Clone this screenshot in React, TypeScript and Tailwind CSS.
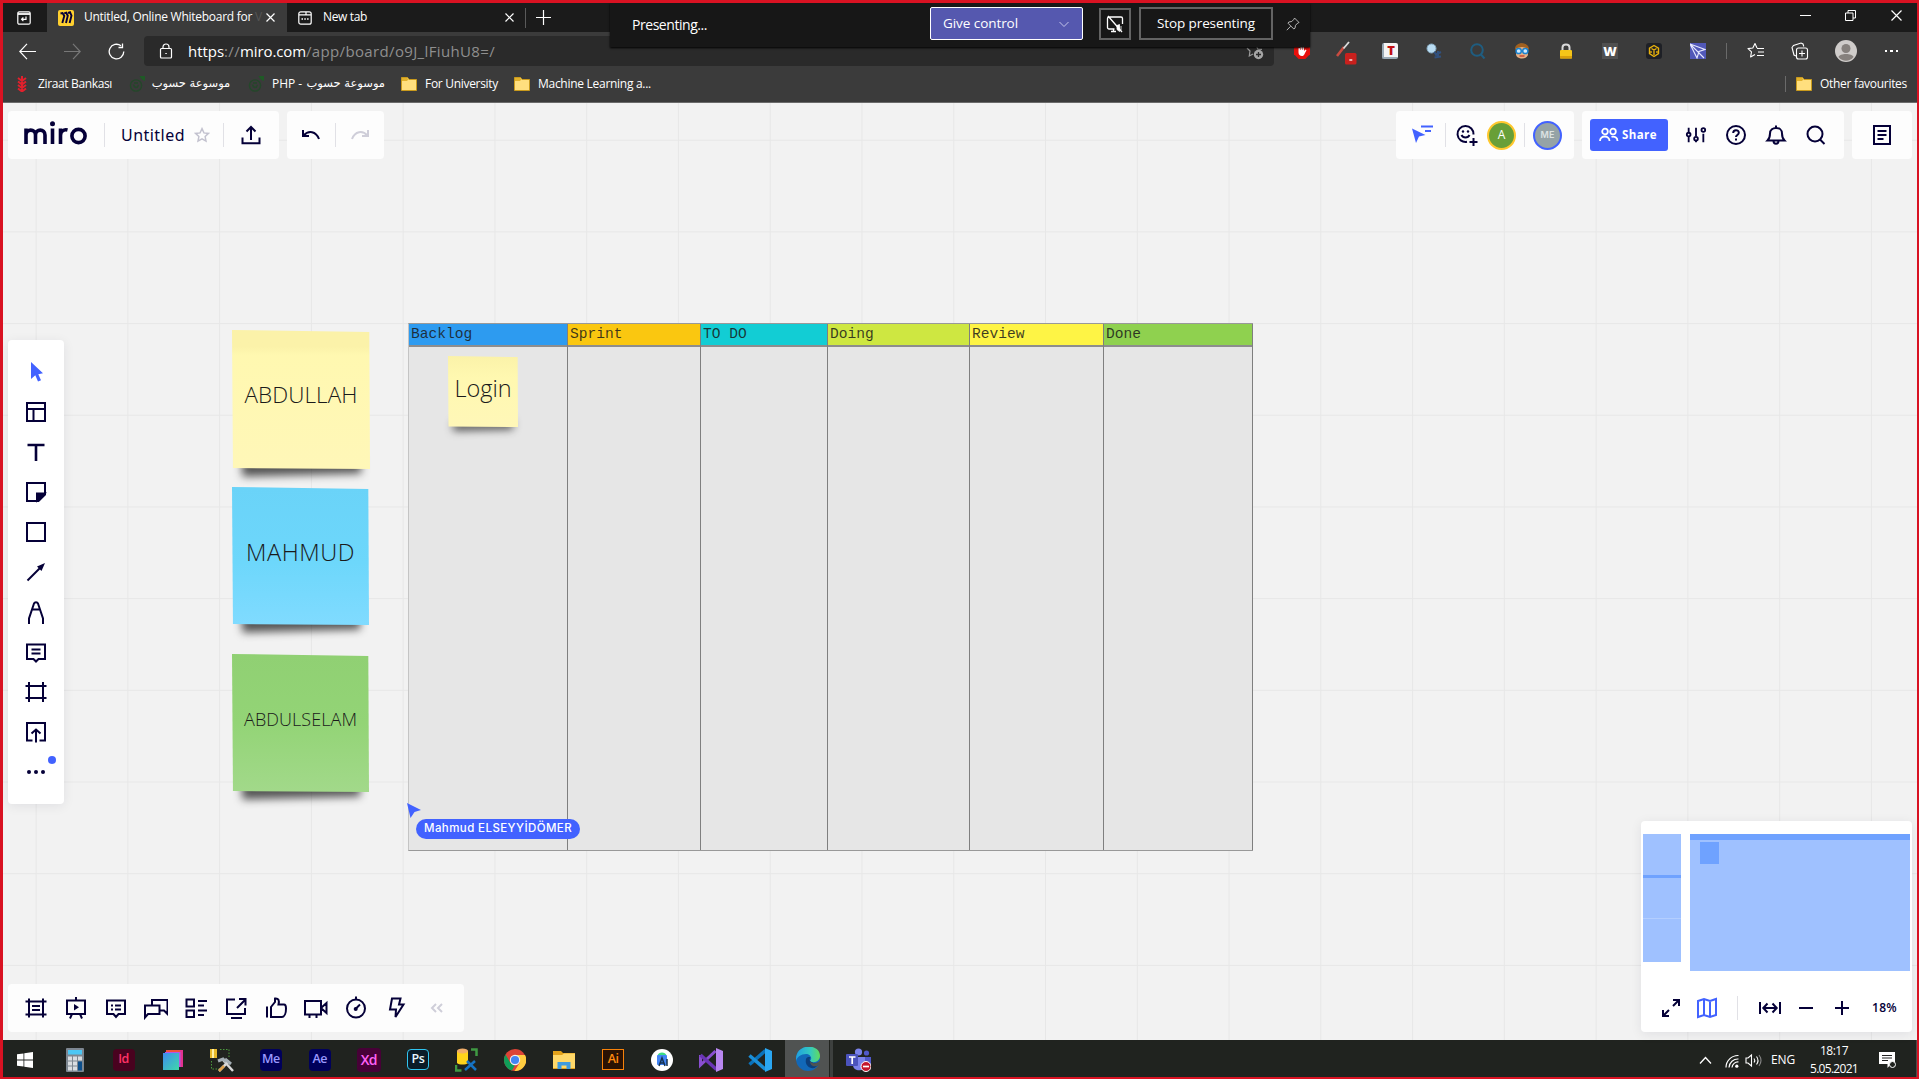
import { useLayoutEffect, useRef, type ReactNode } from "react";

/* Text set to a fixed advance width by spreading the difference over its letters. */
function Fit({ w, className = "", children }: { w: number; className?: string; children: string }) {
  const ref = useRef<HTMLSpanElement>(null);
  useLayoutEffect(() => {
    const el = ref.current;
    if (!el) return;
    el.style.letterSpacing = "0px";
    const natural = el.getBoundingClientRect().width;
    el.style.letterSpacing = `${(w - natural) / children.length}px`;
  }, [w, children]);
  return (
    <span ref={ref} className={`inline-block shrink-0 whitespace-pre ${className}`}>
      {children}
    </span>
  );
}

function Svg({ s = 24, vb = "0 0 24 24", sw = 2, className = "", children }: { s?: number; vb?: string; sw?: number; className?: string; children: ReactNode }) {
  return (
    <svg width={s} height={s} viewBox={vb} fill="none" stroke="currentColor" strokeWidth={sw} className={`shrink-0 ${className}`}>
      {children}
    </svg>
  );
}

function Cell({ className = "", children }: { className?: string; children?: ReactNode }) {
  return <div className={`flex shrink-0 items-center justify-center ${className}`}>{children}</div>;
}

const Sep = ({ className = "" }: { className?: string }) => <div className={`h-6 w-px shrink-0 bg-[#e1e1e6] ${className}`} />;

function Folder() {
  return (
    <svg width="16" height="14" viewBox="0 0 16 14" className="shrink-0">
      <path d="M.5.5h6l1.500 2h7.500v11H.5z" fill="#ffdf7e" stroke="#c99a1c" />
      <path d="M1 1h5.200l1 1.600L6 4H1z" fill="#e2b12c" />
    </svg>
  );
}

function Seedling() {
  return (
    <svg width="16" height="17" viewBox="0 0 16 17" fill="none" className="shrink-0">
      <circle cx="7" cy="10.500" r="5.600" stroke="#24472a" strokeWidth="1.400" />
      <path d="M4.500 9.500c1 4 4 4 5 .5M5 8h4" stroke="#24472a" strokeWidth="1.400" />
      <path d="M10.500 1H16v5c-2-.5-4-2-5.500-5z" fill="#1f5a26" />
    </svg>
  );
}

function TabStrip() {
  return (
    <div className="flex h-[29px] shrink-0 items-center bg-[#1b1b1b] text-white">
      <Cell className="mr-px w-[43px] pr-[2px]">
        <Svg s={14} vb="0 0 14 14" sw={1.2}>
          <rect x=".8" y=".8" width="12.400" height="12.400" rx="1.500" />
          <path d="M1 3h12" strokeWidth="1.800" />
          <path d="M9 5.500v2.800H4.800M6.400 6.500 4.600 8.300l1.800 1.800" />
        </Svg>
      </Cell>
      <div className="flex h-full w-[240px] items-center bg-[#3b3b3b] pl-[11px]">
        <svg width="16" height="16" viewBox="0 0 16 16" className="shrink-0">
          <rect width="16" height="16" rx="2" fill="#ffd02f" />
          <path d="M2.500 3.500 4.500 3l1.800 3-2 7M6.200 3.300l2-.6 1.600 3-1.800 7.300M10 3l2-.7 1.500 3.300L11.600 13" stroke="#050038" strokeWidth="1.900" fill="none" />
        </svg>
        <Fit w={171} className="ml-[10px] pb-[2px] text-[12px]">{"Untitled, Online Whiteboard for "}</Fit>
        <span className="w-[8px] shrink-0 pb-[2px] text-[12px] text-[#555]">V</span>
        <Svg s={9} vb="0 0 9 9" sw={1.200} className="ml-[3px]"><path d="M.5.5l8 8M8.500.5l-8 8" /></Svg>
      </div>
      <div className="flex h-full items-center pl-[11px]">
        <Svg s={14} vb="0 0 14 14" sw={1.200}>
          <rect x=".8" y=".8" width="12.400" height="12.400" rx="2" />
          <path d="M1 3.800h12M8 1v3" />
          <path d="M3.500 8h1.500M6.300 8h1.500M9.100 8h1.500" strokeWidth="1.500" />
        </Svg>
        <Fit w={44} className="ml-[11px] pb-[2px] text-[12px]">New tab</Fit>
        <Svg s={9} vb="0 0 9 9" sw={1.200} className="ml-[138px]"><path d="M.5.5l8 8M8.500.5l-8 8" /></Svg>
        <div className="ml-[11px] h-5 w-px bg-[#5a5a5a]" />
        <Svg s={15} vb="0 0 15 15" sw={1.200} className="ml-[10px]"><path d="M7.500 0v15M0 7.500h15" /></Svg>
      </div>
      <div className="ml-auto flex items-center pb-[5px] pr-[15px]">
        <Svg s={11} vb="0 0 11 11" sw={1} className="mr-[34px]"><path d="M0 5.500h11" /></Svg>
        <Svg s={11} vb="0 0 11 11" sw={1} className="mr-[35px]"><path d="M.5 3h7.500v7.500H.5zM3 3V.5h7.500V8H8" /></Svg>
        <Svg s={11} vb="0 0 11 11" sw={1.200}><path d="M.5.5l10 10M10.500.5l-10 10" /></Svg>
      </div>
    </div>
  );
}

function Extensions() {
  return (
    <div className="flex items-center">
      <Cell className="w-11">
        <svg width="16" height="16" viewBox="0 0 16 16">
          <path d="M4.700 0h6.600L16 4.700v6.600L11.300 16H4.700L0 11.300V4.700z" fill="#e8100c" />
          <path d="M4.500 8V5h1.500v2h.5V3.500H8V7h.5V4h1.500v4l1.500-1.500 1 .8L10.500 11c-.6 1.500-1.300 2-2.600 2C6 13 4.500 11.500 4.500 9.500z" fill="#fff" />
        </svg>
      </Cell>
      <Cell className="w-11">
        <svg width="22" height="28" viewBox="0 0 22 28">
          <path d="M2 19 9 10" stroke="#c94b40" strokeWidth="2.600" />
          <path d="M8.500 11.500 14 5" stroke="#ddd" strokeWidth="1.800" />
          <rect x="10" y="16" width="11.500" height="11.500" rx="1.500" fill="#c8201d" />
          <path d="M14.300 23h3" stroke="#fff" strokeWidth="1.300" />
        </svg>
      </Cell>
      <Cell className="w-11">
        <div className="flex h-4 w-4 items-center justify-center rounded-[2px] border-b-2 border-l-2 border-[#9aaab5] bg-[#f4f4f4] text-[13px] font-extrabold leading-none text-[#c00f12]">T</div>
      </Cell>
      <Cell className="w-11">
        <svg width="16" height="16" viewBox="0 0 16 16">
          <circle cx="5.500" cy="5.500" r="4.500" fill="#b9dcf2" stroke="#86a9c0" />
          <path d="M8 9l5 5M9 12l6-3M12 8v7M8.500 14.500l6.500-1" stroke="#31507d" strokeWidth="2" />
        </svg>
      </Cell>
      <Cell className="w-11">
        <Svg s={16} vb="0 0 16 16" className="text-[#1f5d80]"><circle cx="7" cy="7" r="5.800" /><path d="m10.500 11 4 4.500" /></Svg>
      </Cell>
      <Cell className="w-11">
        <svg width="16" height="16" viewBox="0 0 16 16">
          <path d="M2 6c0-7 12-7 12 0v5c0 6-12 6-12 0z" fill="#e8b184" />
          <path d="M1 7C0-2 16-2 15 7l-2-2-5-1-5 1z" fill="#a0601f" />
          <circle cx="4.700" cy="8" r="2.600" fill="#cfeaff" stroke="#1b83cf" strokeWidth="1.500" />
          <circle cx="11.300" cy="8" r="2.600" fill="#cfeaff" stroke="#1b83cf" strokeWidth="1.500" />
          <path d="M5.500 13h5" stroke="#c23b2b" strokeWidth="1.300" />
        </svg>
      </Cell>
      <Cell className="w-11">
        <svg width="14" height="16" viewBox="0 0 14 16">
          <path d="M3.500 8V4.500c0-4 7-4 7 0V8" fill="none" stroke="#d9d9d9" strokeWidth="2" />
          <rect x="1" y="7" width="12" height="8.500" rx="1" fill="#f5c518" />
          <path d="M1 13h12v2.500H1z" fill="#d99f0c" />
        </svg>
      </Cell>
      <Cell className="w-11">
        <div className="flex h-4 w-4 items-center justify-center bg-[#505050] text-[13px] font-extrabold leading-none text-white">W</div>
      </Cell>
      <Cell className="w-11">
        <svg width="16" height="16" viewBox="0 0 16 16" fill="none">
          <rect width="16" height="16" rx="3" fill="#1e2026" />
          <path d="M8 2.500l4.500 2.700v5.500L8 13.500l-4.500-2.800V5.200z" stroke="#e8b10c" strokeWidth="1.400" />
          <path d="M5.500 5.500 8 7l2.500-1.500M8 7v5M5 8v2M11 8v2" stroke="#e8b10c" strokeWidth="1.300" />
        </svg>
      </Cell>
      <Cell className="w-11">
        <svg width="16" height="16" viewBox="0 0 16 16" fill="none">
          <rect width="16" height="16" fill="#5158b8" />
          <path d="M0 1 15 6.500 9 8.500 7 15zM0 1l14 14M9 8.500l6-2" stroke="#e7e9ff" strokeWidth="1.100" />
        </svg>
      </Cell>
      <div className="ml-[6px] h-4 w-px bg-[#6a6a6a]" />
      <Cell className="ml-[7px] w-11 text-white">
        <Svg s={18} vb="0 0 18 18" sw={1.100}>
          <path d="M10 6 8 1.500 5.800 6 1 6.600l3.500 3.300-.9 5L8 12.500" strokeLinejoin="round" />
          <path d="M10 6.500h7M11 10h6M10 13.500h7" />
        </Svg>
      </Cell>
      <Cell className="w-11 text-white">
        <Svg s={18} vb="0 0 18 18" sw={1.100}>
          <rect x="5.500" y="6" width="11" height="11" rx="2" />
          <path d="M11 8.500v6M8 11.500h6M5 14l-2-1L1 5.500 2.500 3.500 10 1l2 1 .8 2.500" />
        </Svg>
      </Cell>
      <Cell className="w-[48px]">
        <svg width="22" height="22" viewBox="0 0 22 22">
          <circle cx="11" cy="11" r="11" fill="#cfccca" />
          <circle cx="11" cy="8.500" r="4.500" fill="#86817d" />
          <path d="M3.500 17c1-4 14-4 15 0-4 5-11 5-15 0z" fill="#86817d" />
        </svg>
      </Cell>
      <Cell className="w-[43px] gap-[3px]">
        <i className="h-[2px] w-[2.500px] bg-white" /><i className="h-[2px] w-[2.500px] bg-white" /><i className="h-[2px] w-[2.500px] bg-white" />
      </Cell>
    </div>
  );
}

function AddressRow() {
  return (
    <div className="flex h-[38px] shrink-0 items-center text-white">
      <Svg s={17} vb="0 0 17 17" sw={1.200} className="ml-[16px]"><path d="M.5 8.500H17M8 .8.8 8.500 8 16.200" /></Svg>
      <Svg s={17} vb="0 0 17 17" sw={1.200} className="ml-[28px] text-[#777]"><path d="M0 8.500h16.500M9 .8l7.200 7.700L9 16.200" /></Svg>
      <Svg s={17} vb="0 0 17 17" sw={1.300} className="ml-[27px]"><path d="M15.800 8.500A7.300 7.300 0 1 1 13 2.800M14.500.5v4h-4" /></Svg>
      <div className="ml-[19px] flex h-[30px] w-[1130px] items-center rounded-[4px] bg-[#2a2a2a] pl-[14px]">
        <Svg s={16} vb="0 0 16 16" sw={1.200}><rect x="2.500" y="5.500" width="11" height="9.500" rx="1" /><path d="M5 5.500V4c0-4 6-4 6 0v1.500M7.300 10.500h1.500" /></Svg>
        <span className="ml-[14px] flex text-[15px] text-[#8f8f8f]">
          <Fit w={36} className="text-white">https</Fit><Fit w={16}>://</Fit><Fit w={66} className="text-white">miro.com</Fit><Fit w={189}>/app/board/o9J_lFiuhU8=/</Fit>
        </span>
        <svg width="18" height="18" viewBox="0 0 18 18" fill="none" className="ml-auto mr-[10px] shrink-0">
          <path d="M1 6l3 3-.7 5L7 12M10 3l1.800 4 4.200.4" stroke="#9a9a9a" strokeWidth="1.200" />
          <circle cx="12.500" cy="12.500" r="4.700" fill="#a5a5a5" />
          <path d="M12.500 10v5M10 12.500h5" stroke="#2a2a2a" strokeWidth="1.300" />
        </svg>
      </div>
      <div className="ml-[6px]"><Extensions /></div>
    </div>
  );
}

function BookmarksRow() {
  return (
    <div className="flex h-8 shrink-0 items-center pb-[5px] text-[12px] text-white">
      <svg width="10" height="16" viewBox="0 0 10 16" className="ml-[14px]" fill="none" stroke="#e2202c" strokeWidth="2">
        <path d="M5 0v16M1 2l4 3 4-3M1 5.500l4 3 4-3M1 9l4 3 4-3M1 12.500l4 3 4-3" />
      </svg>
      <Fit w={74} className="ml-[11px]">Ziraat Bankası</Fit>
      <div className="ml-[17px]"><Seedling /></div>
      <span dir="rtl" className="ml-[6px] w-[80px] whitespace-nowrap text-center font-['DejaVu_Sans'] text-[11.500px]">موسوعة حسوب</span>
      <div className="ml-[17px]"><Seedling /></div>
      <div className="ml-[8px] flex w-[113px] items-center justify-between whitespace-nowrap">
        <Fit w={30}>PHP -</Fit>
        <span dir="rtl" className="font-['DejaVu_Sans'] text-[11.500px]">موسوعة حسوب</span>
      </div>
      <div className="ml-[16px]"><Folder /></div>
      <Fit w={73} className="ml-[8px]">For University</Fit>
      <div className="ml-[16px]"><Folder /></div>
      <Fit w={113} className="ml-[8px]">Machine Learning a...</Fit>
      <div className="ml-auto h-4 w-px bg-[#6a6a6a]" />
      <div className="ml-[10px]"><Folder /></div>
      <Fit w={87} className="ml-[8px] mr-[10px]">Other favourites</Fit>
    </div>
  );
}

function PresentingBar() {
  return (
    <div className="absolute left-[610px] top-[3px] flex h-[44px] w-[700px] items-center bg-[#171717] pb-[3px] pl-[22px] text-white shadow-[0_1px_2px_#000]">
      <Fit w={75} className="mt-px text-[14px]">Presenting...</Fit>
      <div className="ml-[223px] flex h-[33px] w-[153px] shrink-0 items-center rounded-[2px] border border-white bg-[#5558af] pl-3">
        <Fit w={75} className="text-[13.500px]">Give control</Fit>
        <Svg s={10} vb="0 0 10 10" sw={1} className="ml-[41px] text-[#c4c5ea]"><path d="M.5 3 5 7.500 9.500 3" /></Svg>
      </div>
      <div className="ml-[16px] flex h-[32px] w-[32px] shrink-0 items-center justify-center border-2 border-[#636363]">
        <Svg s={18} vb="0 0 18 18" sw={1.300}>
          <path d="M8.500 14H3a1.500 1.500 0 0 1-1.500-1.500v-9A1.500 1.500 0 0 1 3 2h12a1.500 1.500 0 0 1 1.500 1.500V9M5 16.500h5M7.500 14v2.500M2 1l14 16" />
          <path d="M11 10.500v4l2.500 2v-7zM15 11v4" fill="currentColor" strokeWidth=".8" />
        </Svg>
      </div>
      <div className="ml-[8px] flex h-[33px] w-[134px] shrink-0 items-center justify-center border-2 border-[#636363]">
        <Fit w={98} className="text-[13.500px]">Stop presenting</Fit>
      </div>
      <Svg s={14} vb="0 0 14 14" sw={1} className="ml-[13px] text-[#b5b5b5]"><path d="M8.500 1 13 5.500 11.800 6 9.500 8.300 9 11.200 7.800 12 2 6.200 2.800 5l3-.5L8 2.200zM4.700 9.200.8 13.200" /></Svg>
    </div>
  );
}

const Star = () => (
  <Svg s={16} className="text-[#c3c2cf]" sw={2.200}><path d="m12 2.500 2.900 6.300 6.800.8-5 4.700 1.300 6.800L12 17.700l-6 3.400 1.300-6.800-5-4.700 6.800-.8z" /></Svg>
);

function BoardHeader() {
  const panel = "flex h-12 items-center rounded-[4px] bg-[#fdfdfd]";
  return (
    <div className="flex h-12 text-[#050038]">
      <div className={`${panel} w-[271px]`}>
        <svg width="63" height="24" viewBox="0 0 63 24" fill="none" stroke="#050038" strokeWidth="3.600" className="mb-[4px] ml-[16px]">
          <path d="M2 23V7.500M2 14c0-6.500 9.500-6.500 9.500 0v9M11.500 14c0-6.500 9.500-6.500 9.500 0v9" />
          <path d="M28.500 7.500V23M36.500 23V7.500M36.500 14.500c0-4 3-6.500 7-5.500" />
          <circle cx="28.500" cy="2.800" r="2.500" fill="#050038" stroke="none" />
          <ellipse cx="54.500" cy="15" rx="6.600" ry="6.600" />
        </svg>
        <Sep className="ml-[17px]" />
        <Fit w={64} className="ml-4 font-['Noto_Sans'] text-[16px] font-[450]">Untitled</Fit>
        <div className="ml-[9px]"><Star /></div>
        <Sep className="ml-[13px]" />
        <Svg s={20} vb="0 0 20 20" className="ml-[17px]"><path d="M10 15V2M5.500 6.500 10 2l4.500 4.500M1.500 12.500v5.800h17v-5.800" /></Svg>
      </div>
      <div className={`${panel} ml-2 w-[97px]`}>
        <Svg s={20} vb="0 0 20 20" className="ml-[14px]"><path d="M2 5v6h6M2.500 10.500c5-5.500 12.500-4.500 15.500 3.500" /></Svg>
        <Sep className="ml-[14px]" />
        <Svg s={20} vb="0 0 20 20" className="ml-[14px] text-[#cfced9]"><path d="M18 5v6h-6M17.500 10.500C12.500 5 5 6 2 14" /></Svg>
      </div>
      <div className={`${panel} ml-auto w-[178px]`}>
        <svg width="22" height="24" viewBox="0 0 22 24" className="ml-[15px]">
          <path d="M1 5.500 14.500 12 8 13.500 5 20z" fill="#4262ff" />
          <path d="M10 3.500h12M14 8h6" stroke="#4262ff" strokeWidth="2" />
        </svg>
        <Sep className="ml-[12px]" />
        <Svg s={24} className="ml-[9px]">
          <path d="M18.500 11.500A8 8 0 1 0 12 18.800M6.500 12c1.500 3.300 6.500 3.300 8 0" />
          <path d="M18.500 15v8M14.500 19h8" />
          <circle cx="8" cy="8.500" r="1.200" fill="currentColor" stroke="none" />
          <circle cx="13" cy="8.500" r="1.200" fill="currentColor" stroke="none" />
        </Svg>
        <div className="ml-[8px] flex h-[29px] w-[29px] items-center justify-center rounded-full border-[2.500px] border-[#ffc82e] bg-[#689f38] text-[12px] font-normal text-white">A</div>
        <Sep className="ml-[8px]" />
        <div className="ml-[8px] flex h-[29px] w-[29px] items-center justify-center rounded-full border-[2.500px] border-[#4262ff] bg-[#95a3a6] font-['Inter'] text-[9px] font-semibold text-[#dde3e3]">ME</div>
      </div>
      <div className={`${panel} ml-2 w-[262px] pl-2`}>
        <div className="flex h-8 w-[78px] items-center rounded-[3px] bg-[#4262ff] pl-[9px] text-white">
          <Svg s={20} vb="0 0 20 20" sw={1.800}>
            <circle cx="6" cy="6.500" r="2.800" /><circle cx="14" cy="6.500" r="2.800" />
            <path d="M1 16c0-6 9.500-6 9.500 0M12.500 11.800c3-.8 6 .8 6 4.200" />
          </Svg>
          <Fit w={35} className="ml-[3px] text-[11.500px] font-bold">Share</Fit>
        </div>
        <Cell className="ml-2 w-10"><Svg s={22}><path d="M4 4v5M4 14v6M12 4v9M12 18.500V20M20 10.500V20" /><circle cx="4" cy="11.500" r="2" /><circle cx="12" cy="16" r="2" /><circle cx="20" cy="6.500" r="2" /></Svg></Cell>
        <Cell className="w-10"><Svg><circle cx="12" cy="12" r="9" /><path d="M9.200 10c0-3.700 5.600-3.600 5.600-.3 0 2.300-2.800 2.200-2.800 4.300M12 15.500v2" /></Svg></Cell>
        <Cell className="w-10"><Svg><path d="M3.500 17.500c2-2 2.500-4 2.500-7C6 3 18 3 18 10.500c0 3 .5 5 2.500 7zM9.500 18c0 3.500 5 3.500 5 0M12 2.500v2" /></Svg></Cell>
        <Cell className="w-10"><Svg><circle cx="11" cy="11" r="7.500" /><path d="m16 16.500 4.500 4.500" /></Svg></Cell>
      </div>
      <div className={`${panel} ml-2 w-[60px] justify-center`}>
        <Svg><path d="M4 3h16v18H4zM7.500 8h9M7.500 12h9M7.500 16h6" /></Svg>
      </div>
    </div>
  );
}

function ToolRail() {
  const tools: ReactNode[] = [
    <path key="p" d="M7 2v17l4.300-3.800 2.700 6.300 3-1.300-2.700-6 4.700-.9z" fill="#4262ff" stroke="none" />,
    <path key="p" d="M3 3h18v18H3zM3 9h18M9.500 9v12" />,
    <path key="p" d="M3.500 5h17M12 5v16" strokeWidth="2.600" />,
    <g key="p"><path d="M3 3h18v11.500L14.500 21H3z" /><path d="M13 20.500v-7h7.500z" fill="currentColor" /></g>,
    <path key="p" d="M3 3h18v18H3z" />,
    <g key="p"><path d="M3.500 20.500 17 7" /><path d="m21 3-3.500 8L13 6.500z" fill="currentColor" stroke="none" /></g>,
    <path key="p" d="M5 24v-5.500L10 3.500c.8-1.800 3.200-1.800 4 0l5 15V24M8.500 9.500h7" />,
    <path key="p" d="M3 4.500h18V19h-6.500L12 21.500 9.500 19H3zM7.500 9.500h9M7.500 13.500h9" />,
    <path key="p" d="M5 2v20M19 2v20M1.500 6h21M1.500 18h21" />,
    <path key="p" d="M8.500 20.500H3V3h18v17.500h-5.500M12 22.500V10M7.500 13.500 12 9.500l4.500 4" />,
    <g key="p" fill="currentColor" stroke="none"><circle cx="5" cy="12" r="2" /><circle cx="12" cy="12" r="2" /><circle cx="19" cy="12" r="2" /></g>,
  ];
  return (
    <div className="relative mt-[181px] flex h-[464px] w-14 flex-col items-center rounded-[4px] bg-white pt-3 text-[#050038] shadow-[0_2px_12px_rgba(5,0,56,0.08)]">
      {tools.map((t, i) => <Cell key={i} className="h-10 w-10"><Svg>{t}</Svg></Cell>)}
      <div className="absolute left-[40px] top-[416px] h-2 w-2 rounded-full bg-[#4262ff]" />
    </div>
  );
}

function BottomBar() {
  const tools: ReactNode[] = [
    <path key="p" d="M5 2.500v19M19 2.500v19M1.500 5.500h21M1.500 18.500h21M8 10h8M8 14h8" />,
    <g key="p"><path d="M3 4.500h18V18H3zM12 1v3.500M8 18l-2 4.500M16 18l2 4.500" /><path d="m10 8 5 3.300-5 3.300z" fill="currentColor" stroke="none" /></g>,
    <path key="p" d="M3 4.500h18V18h-6.500L12 21l-2.500-3H3zM7 9.500h2M11 9.500h6M7 13.500h2M11 13.500h6" />,
    <path key="p" d="M8 8.500V4h15.500v14L20 14.500h-4M1 9.500h14.500V18H4L1 21.500z" />,
    <path key="p" d="M2.500 3.500h7.500v7H2.500zM2.500 14.500h7.500v6.500H2.500zM14 5h9M14 9.500h6M14 14.500h9M14 19h6" />,
    <path key="p" d="M11 3.500H3v14.500h18v-6M7 22h11M13 12l8.500-8.500M15 3h6.500v6.500" />,
    <path key="p" d="M3 10.500v11M7 21V11l4-5V2.500c3.500-.5 4.500 2 3.500 6H20c1.500 0 2 1.500 2 4 0 4.500-1.500 8.500-4 8.500z" />,
    <path key="p" d="M1 5h16v13.500H1zM17 12l5.500-5v10L17 12M5.500 19v3M12.500 19v3" />,
    <g key="p"><circle cx="12" cy="12.500" r="9" /><path d="M12 .5v3M11.500 13l4.500-4.500" /><circle cx="11.700" cy="13" r="2" fill="currentColor" stroke="none" /></g>,
    <path key="p" d="M8 2.500h8.500l-1.500 6h4.500L11.500 21l.5-7.500H6z" />,
    <path key="p" d="m12 8-4 4 4 4M18 8l-4 4 4 4" stroke="#cfced9" />,
  ];
  return (
    <div className="flex h-12 w-[456px] items-center rounded-[4px] bg-[#fdfdfd] pl-2 text-[#050038]">
      {tools.map((t, i) => <Cell key={i} className="w-10"><Svg>{t}</Svg></Cell>)}
    </div>
  );
}

function MiniMap() {
  return (
    <div className="flex h-[211px] w-[271px] flex-col rounded-[4px] bg-white pt-[13px] shadow-[0_2px_12px_rgba(5,0,56,0.08)]">
      <div className="flex h-[149px] pl-[2px]">
        <div className="flex h-[128px] w-[38px] flex-col bg-[#9fc1ff]">
          <div className="mt-[41px] h-[3px] bg-[#6fa2ff]" />
          <div className="mt-[40px] h-px bg-[#b3ceff]" />
        </div>
        <div className="ml-[9px] h-[137px] w-[220px] bg-[#9fc1ff]">
          <div className="h-[6px] bg-[#6fa2ff]" />
          <div className="ml-[10px] mt-[2px] h-[22px] w-[19px] bg-[#6fa2ff]" />
        </div>
      </div>
      <div className="flex h-[49px] items-center pt-[1px] text-[#050038]">
        <Svg s={20} vb="0 0 20 20" className="ml-5"><path d="m12 8 5.500-5.500M12 2h6v6M8 12l-5.500 5.500M2 12v6h6" /></Svg>
        <Svg s={22} vb="0 0 22 22" className="ml-[15px] text-[#4262ff]"><path d="m2 4 6-2 6 2 6-2v16l-6 2-6-2-6 2zM8 2v16M14 4v16" /></Svg>
        <Sep className="ml-[19px] h-6" />
        <Svg s={24} className="ml-[20px]"><path d="M2 6v12M22 6v12M5.500 12h13M9.500 7.500 5.300 12l4.200 4.500M14.500 7.500l4.200 4.500-4.200 4.500" /></Svg>
        <div className="ml-[17px] h-[2px] w-[14px] bg-[#050038]" />
        <Svg s={14} vb="0 0 14 14" className="ml-[22px]"><path d="M7 0v14M0 7h14" /></Svg>
        <Fit w={25} className="ml-[23px] text-[12px] font-semibold">18%</Fit>
      </div>
    </div>
  );
}

function Sticky({ place, size, paper, text, label, w }: { place: string; size: string; paper: string; text: string; label: string; w: number }) {
  return (
    <div className={`absolute ${place} ${size}`}>
      <div className="absolute -bottom-[4%] left-[7%] h-[12%] w-[86%] rotate-[-1.500deg] bg-black/65 blur-[4px]" />
      <div className={`absolute inset-0 flex items-center justify-center [clip-path:polygon(0_0,99.500%_1.500%,100%_100%,0.700%_99.300%)] ${paper}`}>
        <Fit w={w} className={`font-['Open_Sans'] font-[340] text-[#1a1a1a] ${text}`}>{label}</Fit>
      </div>
    </div>
  );
}

function Kanban() {
  const cols = [
    { name: "Backlog", w: "w-[159px]", bg: "bg-[#2d9bf0]" },
    { name: "Sprint", w: "w-[133px]", bg: "bg-[#fac710]" },
    { name: "TO DO", w: "w-[127px]", bg: "bg-[#12cdd4]" },
    { name: "Doing", w: "w-[142px]", bg: "bg-[#cee741]" },
    { name: "Review", w: "w-[134px]", bg: "bg-[#fef445]" },
    { name: "Done", w: "w-[149px]", bg: "bg-[#8fd14f]" },
  ];
  return (
    <div className="absolute left-[408px] top-[220px] flex h-[528px] border-y-[1.500px] border-l border-[#999] border-l-[#c4c4c4]">
      {cols.map((c) => (
        <div key={c.name} className={`flex shrink-0 flex-col border-r border-[#7f7f7f] bg-[#e6e6e6] ${c.w}`}>
          <div className={`h-[23px] border-b-2 border-[#8d8d8d] pl-[2px] font-['Liberation_Mono'] text-[14.600px] leading-[21px] text-[#1a1a1a]/85 ${c.bg}`}>{c.name}</div>
        </div>
      ))}
    </div>
  );
}

function Board() {
  return (
    <div className="absolute inset-0 overflow-hidden bg-[#f2f2f2] bg-[linear-gradient(to_right,#e7e7e7_1.200px,transparent_1.200px),linear-gradient(to_bottom,#e7e7e7_1.200px,transparent_1.200px)] bg-[size:91.780px_91.700px] bg-[position:35.600px_36.700px]">
      <Kanban />
      <Sticky place="left-[232px] top-[227px]" size="h-[139px] w-[138px]" paper="bg-linear-to-b from-[#fbf2a9] from-12% via-[#fff8b0] via-18% to-[#fff7b8]" text="text-[22.500px] pb-[10px]" label="ABDULLAH" w={113} />
      <Sticky place="left-[232px] top-[384px]" size="h-[138px] w-[137px]" paper="bg-linear-to-b from-[#6ad3f8] via-[#6dd7fb] via-55% to-[#80dbff]" text="text-[23.700px] pb-[6px]" label="MAHMUD" w={109} />
      <Sticky place="left-[232px] top-[551px]" size="h-[138px] w-[137px]" paper="bg-linear-to-b from-[#90d073] via-[#93d476] via-50% to-[#a2d98a]" text="text-[18px] pb-2" label="ABDULSELAM" w={113} />
      <Sticky place="left-[448px] top-[253px]" size="h-[71px] w-[70px]" paper="bg-linear-to-b from-[#fbf2a9] via-[#fff8b0] via-30% to-[#fff7b8]" text="text-[23.500px] pb-[6px]" label="Login" w={57} />
      <svg width="14" height="15" viewBox="0 0 14 15" className="absolute left-[407px] top-[700px]">
        <path d="M0 0 14 7 7.500 9 3.500 15z" fill="#4262ff" />
      </svg>
      <div className="absolute left-[416px] top-[716px] flex h-5 w-[164px] items-center justify-center rounded-full bg-[#4262ff] font-['Inter'] text-[11.500px] font-medium text-white">
        <Fit w={148}>Mahmud ELSEYYİDÖMER</Fit>
      </div>
    </div>
  );
}

function Tile({ label, className }: { label: string; className: string }) {
  return <div className={`flex items-center justify-center rounded-[4px] font-semibold leading-none tracking-[-0.500px] ${className}`}>{label}</div>;
}

function Taskbar() {
  const apps: ReactNode[] = [
    <svg key="win" width="16" height="16" viewBox="0 0 16 16"><path d="M0 2.300 6.500 1.400v6.200H0zM7.300 1.300 16 0v7.600H7.300zM0 8.400h6.500v6.200L0 13.700zM7.300 8.400H16V16l-8.700-1.300z" fill="#fff" /></svg>,
    <svg key="calc" width="18" height="24" viewBox="0 0 18 24"><rect width="18" height="24" rx="1" fill="#7d8791" /><path d="M2 2h14v4.500H2z" fill="#4cc7f4" /><path d="M2 8.500h4v4H2zM7 8.500h4v4H7zM12 8.500h4v4h-4zM2 13.500h4v4H2zM7 13.500h4v4H7zM2 18.500h4v4H2zM7 18.500h4v4H7z" fill="#d9dde1" /><path d="M12 13.500h4v9h-4z" fill="#0d4f8b" /></svg>,
    <Tile key="id" label="Id" className="h-[22px] w-[22px] bg-[#49021f] text-[12.500px] text-[#ff3366]" />,
    <svg key="layers" width="20" height="20" viewBox="0 0 20 20"><defs><linearGradient id="lay" x1="0" y1="0" x2="1" y2="1"><stop stopColor="#3d8cf0" /><stop offset="1" stopColor="#3fd9a8" /></linearGradient></defs><path d="M3 0h17v17H3z" fill="#e2338f" /><path d="M3 0h14v2H3z" fill="#f0503c" /><path d="M2 2h15.500v15H2z" fill="#b556e6" /><path d="M0 3h16v17H0z" fill="url(#lay)" /></svg>,
    <svg key="db" width="24" height="24" viewBox="0 0 24 24" fill="none"><path d="M0 1h7v9H0z" fill="#e8b92a" /><path d="M2 1h2v9H2z" fill="#fff1a8" /><path d="M10 1.500h9v8M1.500 13v8H10" stroke="#4c9a3e" strokeDasharray="1.500 1.500" /><path d="m9 23 10-10M13 12l10 11" stroke="#d8d8d8" strokeWidth="2.500" /><path d="m9 23 5-5" stroke="#e0a24c" strokeWidth="2.500" /><path d="m8 13 5-2 3 3M15 11l6 5" stroke="#a3adb3" strokeWidth="3" /></svg>,
    <Tile key="me" label="Me" className="h-[22px] w-[22px] bg-[#00005b] text-[12.500px] text-[#9999ff]" />,
    <Tile key="ae" label="Ae" className="h-[22px] w-[22px] bg-[#00005b] text-[12.500px] text-[#9999ff]" />,
    <Tile key="xd" label="Xd" className="h-6 w-6 bg-[#470137] text-[14px] text-[#ff61f6]" />,
    <Tile key="ps" label="Ps" className="h-[21px] w-[22px] border-[1.500px] border-[#31c5f0] bg-[#0a1c28] text-[12.500px] text-[#e8f7ff]" />,
    <svg key="sql" width="24" height="24" viewBox="0 0 24 24" fill="none"><path d="M2 3v12c2 2 9 2 11 0V3z" fill="#ffd31a" /><ellipse cx="7.500" cy="3" rx="5.500" ry="2.500" fill="#f0ae6a" /><path d="M16 1.500h5.500V8M1 17v5.500h5.500" stroke="#3f9a43" strokeWidth="2.500" /><path d="m10 22 10-9M12 13l9 9" stroke="#1673c4" strokeWidth="2.500" /></svg>,
    <svg key="chrome" width="22" height="22" viewBox="0 0 22 22"><circle cx="11" cy="11" r="11" fill="#db4437" /><path d="M1.500 5.500 6.300 13.700 11 16 8 21.600A11 11 0 0 1 1.500 5.500z" fill="#0f9d58" /><path d="M21 6H11l4.700 7.700L10.500 22A11 11 0 0 0 21 6z" fill="#ffcd40" /><circle cx="11" cy="11" r="5.200" fill="#f1f1f1" /><circle cx="11" cy="11" r="4.100" fill="#4285f4" /></svg>,
    <svg key="files" width="22" height="18" viewBox="0 0 22 18"><path d="M0 0h8l2 2h12v16H0z" fill="#e3a21a" /><path d="M0 4h9l2-1.500h11V17H0z" fill="#ffd869" /><path d="M4.500 18v-7h13v7h-4v-3.500h-5V18z" fill="#3f9be0" /></svg>,
    <Tile key="ai" label="Ai" className="h-[21px] w-[22px] rounded-none border-[1.500px] border-[#f7820a] bg-[#2a1203] text-[12.500px] text-[#ff8a0f]" />,
    <svg key="as" width="22" height="22" viewBox="0 0 22 22" fill="none"><circle cx="11" cy="11" r="11" fill="#fff" /><path d="M6.500 6.500c1-4 8-4 9 0z" fill="#3ddc84" /><rect x="6" y="6" width="10" height="10" rx="1" fill="#4285f4" /><path d="m8 17 3-8 3 8M9 14h4M16 10v7" stroke="#16324f" strokeWidth="1.500" /></svg>,
    <svg key="vs" width="24" height="24" viewBox="0 0 24 24" fill="none"><path d="M1.500 7v10l15-14" stroke="#8a4fd0" strokeWidth="3" /><path d="m1.500 7 16 14.500" stroke="#6b35b5" strokeWidth="3.500" /><path d="M17 0l7 3v18l-7 3z" fill="#b987f0" /></svg>,
    <svg key="code" width="24" height="24" viewBox="0 0 24 24" fill="none"><path d="m1.500 16.500 16-14" stroke="#0a72ba" strokeWidth="3.500" /><path d="m1.500 7.500 16 14" stroke="#1a8fd8" strokeWidth="3.500" /><path d="M17 0l7 3v18l-7 3z" fill="#2aa7f2" /></svg>,
    <svg key="edge" width="24" height="24" viewBox="0 0 24 24"><defs><linearGradient id="eg" x1="0" y1="0" x2="1" y2="0"><stop stopColor="#1f9fe0" /><stop offset=".6" stopColor="#34c9c0" /><stop offset="1" stopColor="#62db5c" /></linearGradient></defs><circle cx="12" cy="12" r="12" fill="#1268b8" /><path d="M0 12C0-4 24-4 24 9c0 5-6 8-10 5 3-3 0-7-4-7-5 0-9 3-10 7z" fill="url(#eg)" /><path d="M14 14c3 3 7 2 9.500 1-1 3-3 5-5 6-5 1-10-3-8.500-9 1-2 3-2.500 4.500-1.500-.8 1-1.200 2-.5 3.500z" fill="#0c3f7c" /><path d="M14 14.200c3 3.300 8 2.300 10-1V17l-3 2c-4 1-7-1-7-4.800z" fill="#505352" /></svg>,
    <svg key="teams" width="25" height="24" viewBox="0 0 25 24"><circle cx="12.500" cy="4" r="3.600" fill="#7b83eb" /><circle cx="20.500" cy="5" r="2.600" fill="#5059c9" /><path d="M17 9h8v7c0 4-8 4-8 0z" fill="#5059c9" /><path d="M7 9h12v8c0 7-12 7-12 0z" fill="#7b83eb" /><rect y="6" width="12" height="12" rx="1" fill="#4b53bc" /><path d="M3 9h6.500M6.200 9v7" stroke="#fff" strokeWidth="1.700" /><circle cx="20" cy="18.500" r="5" fill="#c4162e" stroke="#fff" /><path d="M17 18.500h6" stroke="#fff" strokeWidth="1.700" /></svg>,
  ];
  return (
    <div className="flex h-[37px] shrink-0 items-center bg-[#20231f] text-white">
      <div className="-ml-[3px] flex h-full items-center pt-[2px]">
        {apps.map((a, i) =>
          i === 16 ? (
            <div key={i} className="-mt-[2px] flex h-[37px] w-[49.050px] shrink-0">
              <Cell className="h-full w-[44px] bg-[#505352] pl-[3px] pt-[1px]">{a}</Cell>
              <div className="ml-px h-full w-[3px] bg-[#3d403e]" />
            </div>
          ) : (
            <Cell key={i} className={i > 0 && i < 10 ? "w-[49.050px] pl-[2px]" : "w-[49.050px]"}>{a}</Cell>
          ),
        )}
      </div>
      <div className="ml-auto flex items-center">
        <Svg s={13} vb="0 0 13 13" sw={1.300} className="mt-[3px]"><path d="m1 9.500 5.500-6 5.500 6" /></Svg>
        <Svg s={14} vb="0 0 14 14" sw={1.200} className="ml-[13px] mt-[4px]"><path d="M1 13.500A12 12 0 0 1 13.500 1.500M4 13.500a9 9 0 0 1 9.500-8.500M7 13.500a6 6 0 0 1 6.500-5.500" /><circle cx="11.800" cy="12.200" r="1.600" fill="currentColor" stroke="none" /></Svg>
        <Svg s={17} vb="0 0 17 17" sw={1.100} className="ml-[6px] mt-[3px]"><path d="M1 6v5h2l3.500 3V3L3 6zM9 6.500q1.500 2 0 4M11.500 4.500q3 4 0 8" /><path d="M14 3q4 5.500 0 11" stroke="#888" /></Svg>
        <Fit w={24} className="ml-[9px] mt-[3px] text-[12px]">ENG</Fit>
        <div className="ml-[15px] mt-[2px] flex w-[48px] flex-col items-center text-[12px] leading-[18px]">
          <Fit w={28}>18:17</Fit>
          <Fit w={48}>5.05.2021</Fit>
        </div>
        <svg width="17" height="17" viewBox="0 0 17 17" fill="none" className="ml-[21px] mr-[20px] mt-[3px]"><path d="M0 0h16v12h-4l-3.500 4v-4H0z" fill="#fff" /><path d="M3 3.500h10M3 6h10M3 8.500h6" stroke="#222" /><circle cx="13.500" cy="12.500" r="3" fill="#20231f" stroke="#fff" /></svg>
        <div className="h-[37px] w-px bg-[#4a4d4a]" />
      </div>
    </div>
  );
}

export default function App() {
  return (
    <div className="relative flex h-[1079px] w-[1919px] flex-col overflow-hidden border-2 border-l-[3px] border-t-[3px] border-[#d91222] bg-[#3b3b3b] font-['Open_Sans',sans-serif]">
      <TabStrip />
      <AddressRow />
      <BookmarksRow />
      <div className="h-px shrink-0 bg-[#6b6b6b]" />
      <div className="relative -ml-[3px] min-h-0 flex-1 pl-[3px]">
        <Board />
        <div className="relative flex h-full flex-col px-[5px] pt-2">
          <BoardHeader />
          <ToolRail />
          <div className="mb-2 mt-auto flex items-end justify-between">
            <BottomBar />
            <MiniMap />
          </div>
        </div>
      </div>
      <Taskbar />
      <div className="absolute -left-[3px] -top-[3px]"><PresentingBar /></div>
      <div className="absolute bottom-0 left-[-3px] top-0 w-[3px] bg-[#d91222]" />
    </div>
  );
}
